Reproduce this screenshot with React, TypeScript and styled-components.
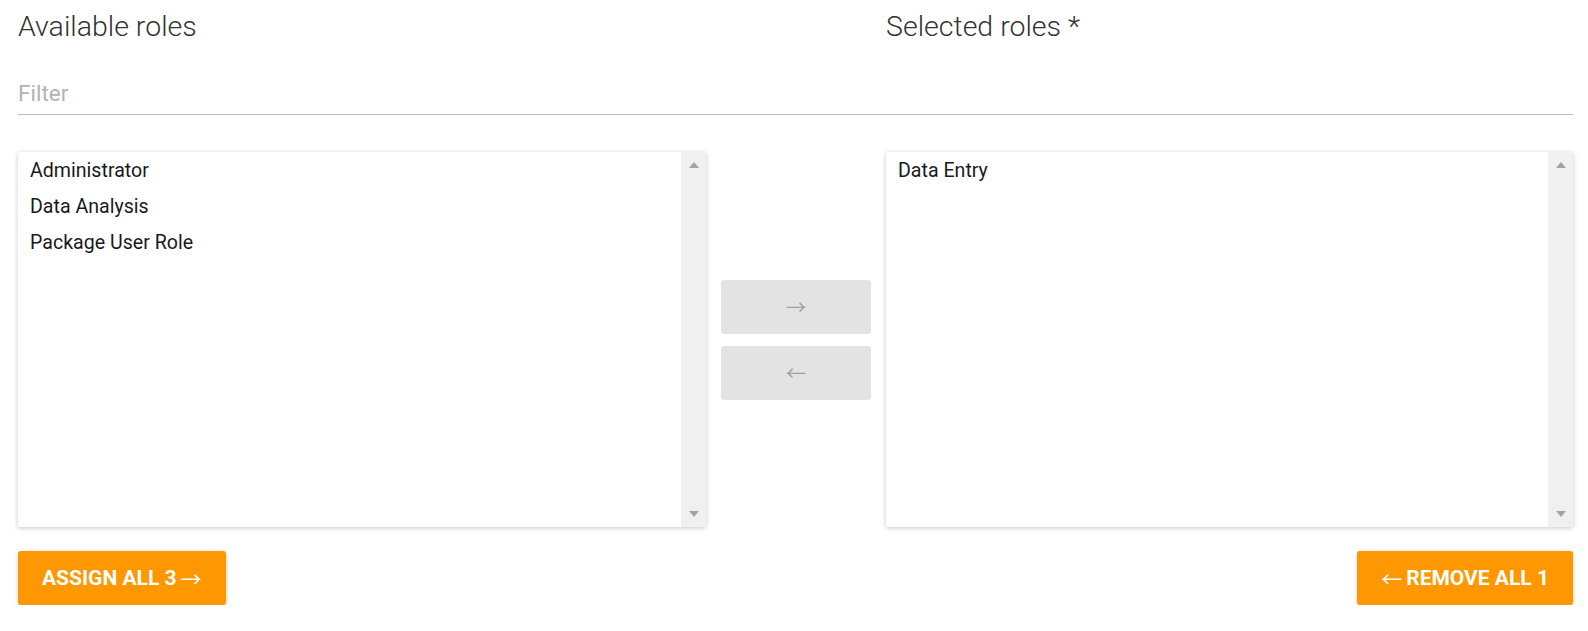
import React from "react";
import styled, { createGlobalStyle } from "styled-components";

const Global = createGlobalStyle`
  html, body { margin: 0; padding: 0; background: #fff; }
  body { font-family: Roboto, "Liberation Sans", Arial, sans-serif; }
  * { box-sizing: border-box; }
`;

const Page = styled.div`
  padding: 0 15px 0 18px;
  width: 1588px;
`;

const Columns = styled.div`
  display: grid;
  grid-template-columns: 688px 180px 687px;
`;

const Title = styled.h2<{ $col: number }>`
  grid-column: ${(p) => p.$col};
  margin: 0;
  padding-top: 10px;
  font-size: 28.5px;
  line-height: 34px;
  font-weight: 300;
  color: #333;
`;

const FilterField = styled.div`
  margin-top: 31px;
  border-bottom: 1px solid #bdbdbd;
  height: 40px;
  padding-bottom: 4px;
  display: flex;
  align-items: center;
`;

const FilterInput = styled.input`
  border: none;
  outline: none;
  padding: 0;
  width: 100%;
  font-family: Roboto, "Liberation Sans", Arial, sans-serif;
  font-size: 22.5px;
  font-weight: 400;
  color: #333;
  background: transparent;
  &::placeholder { color: #b3b3b3; }
`;

const ListsRow = styled(Columns)`
  margin-top: 37px;
  height: 375px;
`;

const ListBox = styled.div`
  display: flex;
  background: #fff;
  box-shadow: 0 1px 5px rgba(0, 0, 0, 0.22);
  border-radius: 2px;
  overflow: hidden;
`;

const Options = styled.ul`
  flex: 1;
  margin: 0;
  padding: 1px 0 0;
  list-style: none;
`;

const Option = styled.li`
  padding: 0 12px;
  height: 36px;
  line-height: 36px;
  font-size: 19.6px;
  color: #1a1a1a;
`;

const ScrollTrack = styled.div`
  width: 25px;
  background: #f0f0f0;
  display: flex;
  flex-direction: column;
  justify-content: space-between;
  align-items: center;
  padding: 10px 0;
`;

const Arrow = styled.div<{ $down?: boolean }>`
  width: 0;
  height: 0;
  border-left: 5.5px solid transparent;
  border-right: 5.5px solid transparent;
  ${(p) =>
    p.$down
      ? "border-top: 6px solid #a3a3a3;"
      : "border-bottom: 6px solid #a3a3a3;"}
`;

const Middle = styled.div`
  display: flex;
  flex-direction: column;
  justify-content: center;
  align-items: center;
  gap: 12px;
`;

const ArrowGlyph = styled.span`
  font-family: "Noto Sans CJK JP", "DejaVu Sans", sans-serif;
  font-weight: 400;
`;

const MoveButton = styled.button`
  width: 150px;
  height: 54px;
  border: none;
  border-radius: 3px;
  background: #e3e3e3;
  color: #a0a0a0;
  font-size: 20px;
  padding: 0;
  display: flex;
  align-items: center;
  justify-content: center;
  cursor: default;
`;

const BottomRow = styled.div`
  margin-top: 24px;
  display: flex;
  justify-content: space-between;
`;

const ActionButton = styled.button`
  height: 54px;
  padding: 0 24px;
  border: none;
  border-radius: 3px;
  background: #ff9800;
  color: #fff;
  font-family: Roboto, "Liberation Sans", Arial, sans-serif;
  font-size: 21px;
  font-weight: 700;
  text-transform: uppercase;
  box-shadow: 0 1px 4px rgba(0, 0, 0, 0.2);
  display: flex;
  align-items: center;
  gap: 4px;
  cursor: pointer;
`;

function RoleList({ items }: { items: string[] }) {
  return (
    <ListBox>
      <Options>
        {items.map((i) => (
          <Option key={i}>{i}</Option>
        ))}
      </Options>
      <ScrollTrack>
        <Arrow />
        <Arrow $down />
      </ScrollTrack>
    </ListBox>
  );
}

export default function App() {
  const available = ["Administrator", "Data Analysis", "Package User Role"];
  const selected = ["Data Entry"];
  return (
    <Page>
      <Global />
      <Columns>
        <Title $col={1}>Available roles</Title>
        <Title $col={3}>Selected roles *</Title>
      </Columns>
      <FilterField>
        <FilterInput placeholder="Filter" />
      </FilterField>
      <ListsRow>
        <RoleList items={available} />
        <Middle>
          <MoveButton>
            <ArrowGlyph>→</ArrowGlyph>
          </MoveButton>
          <MoveButton>
            <ArrowGlyph>←</ArrowGlyph>
          </MoveButton>
        </Middle>
        <RoleList items={selected} />
      </ListsRow>
      <BottomRow>
        <ActionButton>
          Assign all {available.length}
          <ArrowGlyph>→</ArrowGlyph>
        </ActionButton>
        <ActionButton>
          <ArrowGlyph>←</ArrowGlyph>
          Remove all {selected.length}
        </ActionButton>
      </BottomRow>
    </Page>
  );
}
